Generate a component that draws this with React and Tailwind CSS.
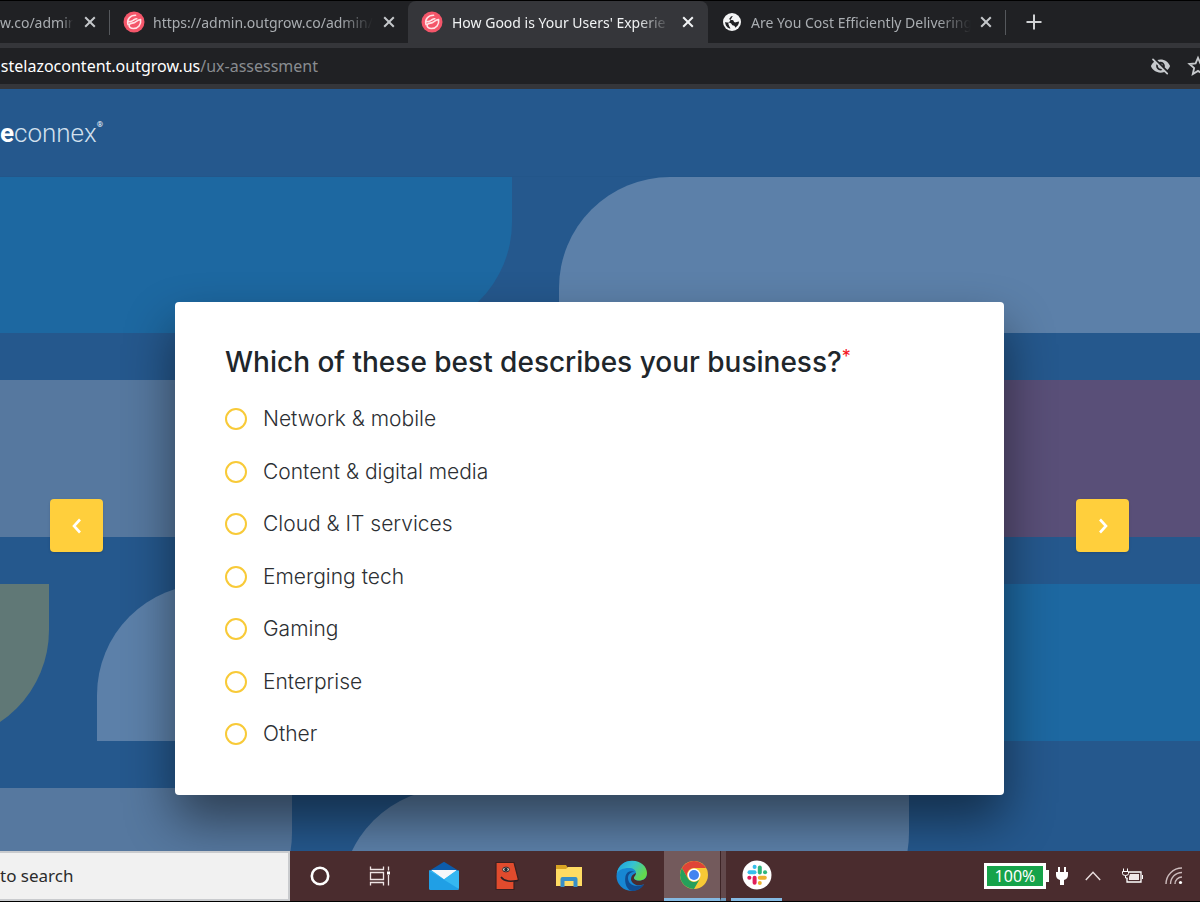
import React from "react";

const OPTIONS = [
  "Network & mobile",
  "Content & digital media",
  "Cloud & IT services",
  "Emerging tech",
  "Gaming",
  "Enterprise",
  "Other",
];

const FADE = "[mask-image:linear-gradient(to_right,black_85%,transparent_100%)]";

function CloseIcon() {
  return (
    <svg viewBox="0 0 12 12" className="size-3" fill="none" stroke="currentColor" strokeWidth="2">
      <path d="M1.2 1.2 10.8 10.8M10.8 1.2 1.2 10.8" />
    </svg>
  );
}

function OutgrowIcon() {
  return (
    <svg viewBox="0 0 22 22" className="size-[22px] shrink-0">
      <circle cx="11" cy="11" r="10.5" fill="#f4566a" />
      <path
        d="M5 13.600C3.600 8.400 7 4.300 12.600 4.300M17.600 8.600c.8 4.900-2.500 8.900-7.200 8.900-3 0-4.700-1.800-4.200-3.600.7-2.400 3.300-1.300 5.500-2.400 2.300-1.200 3.300-3 5.900-2.900M6.200 10.500c1.800.6 3.300-.8 4.800-1.700 1-.6 1.800-.9 2.800-1"
        fill="none"
        stroke="#ffe3e6"
        strokeWidth="1.600"
        strokeLinecap="round"
      />
    </svg>
  );
}

function GlobeIcon() {
  return (
    <svg viewBox="0 0 18 18" className="size-[18px] shrink-0">
      <circle cx="9" cy="9" r="9" fill="#f4f5f6" />
      <path
        d="M10.500 1.800c-.2 1.500-1.500 1.300-2.500 1.600-.9.300-.5 1.600-1.300 1.900-.7.300-.6.900-.1 1.300.8.700 2.600 0 3.500.7.800.6.500 1.700 1.500 2 1.200.4 2.200-.5 4.500-.7-.2 2.700-1.700 5-4 6.100-.1-1.400-.4-2-1.700-2.200-1.700-.200-1.600-1.700-2.600-2.300C6.500 9.500 4.400 9.700 2.200 9c-.1 3.300 2.100 6 5 6.700.3-1-.5-1.700-1-2.500-.4-.8-.3-1.600-1-2.200"
        fill="#202124"
      />
    </svg>
  );
}

function Logo() {
  return (
    <a href="#home" className="flex items-start font-['Roboto',sans-serif] text-[26px] leading-8 whitespace-nowrap text-white">
      <span className="font-bold">e</span>
      <span className="font-light text-[#d3e0ee]">connex</span>
      <span className="text-[8px] leading-4">®</span>
    </a>
  );
}

function Tabs() {
  return (
    <div className="flex h-[43px] items-stretch overflow-hidden border-t border-black bg-[#202124] font-['Noto_Sans','Open_Sans',sans-serif] text-[14px] text-[#a9adb1]">
      <div className="flex w-[110px] shrink-0 items-center">
        <span className={"w-[73px] overflow-hidden whitespace-nowrap " + FADE}>w.co/admin/</span>
        <button aria-label="Close tab" className="ml-[11px] text-[#c4c7ca]"><CloseIcon /></button>
        <span className="ml-auto h-[25px] w-px bg-[#55585c]" />
      </div>
      <div className="flex w-[298px] shrink-0 items-center pl-[13px]">
        <OutgrowIcon />
        <span className={"ml-2 w-[220px] overflow-hidden whitespace-nowrap " + FADE}>https://admin.outgrow.co/admin/</span>
        <button aria-label="Close tab" className="ml-[10px] text-[#c4c7ca]"><CloseIcon /></button>
      </div>
      <div className="flex w-[300px] shrink-0 items-center rounded-t-lg bg-[#35363a] pl-[13px] text-[#f1f3f4]">
        <OutgrowIcon />
        <span className={"ml-[9px] w-[218px] overflow-hidden whitespace-nowrap " + FADE}>How Good is Your Users' Experie</span>
        <button aria-label="Close tab" className="ml-3"><CloseIcon /></button>
      </div>
      <div className="flex w-[298px] shrink-0 items-center pl-[15px]">
        <GlobeIcon />
        <span className={"ml-[10px] w-[220px] overflow-hidden whitespace-nowrap " + FADE}>Are You Cost Efficiently Delivering</span>
        <button aria-label="Close tab" className="ml-[9px] text-[#c4c7ca]"><CloseIcon /></button>
        <span className="ml-auto h-[25px] w-px bg-[#55585c]" />
      </div>
      <button aria-label="New tab" className="ml-5 text-[#d0d2d4]">
        <svg viewBox="0 0 16 16" className="size-4" stroke="currentColor" strokeWidth="2"><path d="M8 .500v15M.500 8h15" /></svg>
      </button>
    </div>
  );
}

function AddressBar() {
  return (
    <div className="flex h-[46px] items-center justify-between overflow-hidden border-t-[5px] border-b-[5px] border-[#35363a] bg-[#202124] font-['Noto_Sans','Open_Sans',sans-serif] text-[16px]">
      <div className="flex w-[318px] justify-end whitespace-nowrap">
        <span className="text-white">stelazocontent.outgrow.us</span>
        <span className="text-[#898c90]">/ux-assessment</span>
      </div>
      <div className="-mr-[9px] flex items-center gap-4 text-[#c6c9cc]">
        <svg viewBox="0 0 24 24" className="size-[21px]" fill="currentColor">
          <path d="M12 6.500c2.760 0 5 2.240 5 5 0 .51-.1 1-.24 1.460l3.060 3.060c1.390-1.230 2.490-2.770 3.180-4.530C21.270 7.110 17 4 12 4c-1.270 0-2.490.2-3.640.57l2.170 2.170c.47-.14.96-.24 1.470-.24zM2.710 3.160a1 1 0 0 0 0 1.410l1.970 1.970A11.900 11.900 0 0 0 1 11.500C2.730 15.890 7 19 12 19c1.520 0 2.970-.3 4.310-.82l2.720 2.720a1 1 0 0 0 1.410-1.410L4.130 3.160a1 1 0 0 0-1.420 0zM12 16.500c-2.760 0-5-2.240-5-5 0-.77.18-1.500.49-2.140l1.570 1.570c-.03.18-.06.37-.06.57 0 1.660 1.340 3 3 3 .2 0 .38-.03.570-.07L14.140 16c-.65.320-1.370.5-2.140.5zm2.970-5.330a2.970 2.970 0 0 0-2.640-2.640l2.640 2.640z" />
        </svg>
        <svg viewBox="0 0 24 24" className="size-[22px]" fill="none" stroke="currentColor" strokeWidth="2">
          <path d="m12 3 2.600 6.200 6.700.6-5.100 4.400 1.500 6.600-5.700-3.500-5.700 3.500 1.500-6.600-5.100-4.400 6.700-.6z" />
        </svg>
      </div>
    </div>
  );
}

function Backdrop() {
  return (
    <svg
      viewBox="0 89 1200 762"
      preserveAspectRatio="xMidYMin slice"
      className="absolute inset-0 size-full"
      aria-hidden="true"
    >
      <path d="M0 177H512V222A111 111 0 0 1 401 333H0Z" fill="#1d68a1" />
      <path d="M559 333V288A111 111 0 0 1 670 177H1200V333Z" fill="#5c80a9" />
      <path d="M0 380H600V537H0Z" fill="#56789f" />
      <path d="M700 380H1200V537H700Z" fill="#594f78" />
      <path d="M-160 584H49V630A111 111 0 0 1 -62 741H-160Z" fill="#607876" />
      <path d="M97 741V695A111 111 0 0 1 208 584H600V741Z" fill="#5c80a9" />
      <path d="M700 584H1200V741H700Z" fill="#1d68a1" />
      <path d="M0 788H292V833A111 111 0 0 1 181 944H0Z" fill="#56789f" />
      <path d="M341 944V899A111 111 0 0 1 452 788H909V833A111 111 0 0 1 798 944Z" fill="#5c80a9" />
    </svg>
  );
}

function Arrow({ d }) {
  return (
    <svg viewBox="0 0 12 16" className="h-4 w-3" fill="none" stroke="currentColor" strokeWidth="2.600">
      <path d={d} />
    </svg>
  );
}

const NAV =
  "mb-[46px] flex size-[53px] shrink-0 items-center justify-center self-center rounded bg-[#ffcf3c] text-white shadow";

function Quiz() {
  return (
    <main className="relative flex-1 overflow-hidden bg-[#25588d]">
      <Backdrop />
      <div className="relative">
        <header className="flex h-[88px] items-center border-b border-[#23568a] bg-[#25588d]">
          <Logo />
        </header>
        <div className="flex gap-[72px] pt-[125px] pr-[71px] pb-14 pl-[50px]">
          <button aria-label="Previous question" className={NAV}><Arrow d="M9 1.500 3 8l6 6.500" /></button>
          <form className="flex-1 rounded bg-white px-[50px] pt-10 pb-[50px] font-['Inter','Lato',sans-serif] shadow-[0_25px_50px_rgba(0,0,0,0.48)]">
            <h1 className="mb-[26px] text-[28px] leading-10 font-medium text-[#20262b]">
              Which of these best describes your business?
              <sup className="text-[18px] font-normal text-[#f4141e]">*</sup>
            </h1>
            <div role="radiogroup" className="flex h-[337px] flex-col justify-between">
              {OPTIONS.map((label) => (
                <label key={label} className="flex h-[22px] items-center text-[21px] font-light text-[#2c2f33]">
                  <input
                    type="radio"
                    name="business"
                    className="mr-4 size-[22px] appearance-none rounded-full border-2 border-[#f8ca38] checked:bg-[#f8ca38]"
                  />
                  {label}
                </label>
              ))}
            </div>
          </form>
          <button aria-label="Next question" className={NAV}><Arrow d="m3 1.500 6 6.500-6 6.500" /></button>
        </div>
      </div>
    </main>
  );
}

function MailIcon() {
  return (
    <svg viewBox="0 0 32 30" className="h-[30px] w-8">
      <path d="M1 10 16 .800 31 10v5H1z" fill="#0c5cab" />
      <path d="M1 9.500h30V27q0 2-2 2H3q-2 0-2-2z" fill="#35b7f1" />
      <path d="M3.500 9h25L16 18z" fill="#f5f7fa" />
      <path d="M1 9.500 31 28q-.5 1-2 1H3q-2 0-2-2z" fill="#209fe5" />
      <path d="M3.500 9h25L16 18z" fill="#f5f7fa" />
    </svg>
  );
}

function FaceIcon() {
  return (
    <svg viewBox="0 0 26 30" className="h-[30px] w-[26px]">
      <path d="M2 1.500h18l4.500 17.500-4.500 1.500V28.500H2z" fill="#e04b2d" stroke="#3a2020" strokeWidth="1.200" strokeLinejoin="round" />
      <path d="M7 16c3.500 5 10 4.500 17 3.500" fill="none" stroke="#2a2025" strokeWidth="1.500" />
      <ellipse cx="12" cy="8.500" rx="3.500" ry="2.400" fill="#d5c9bb" stroke="#33272b" />
      <circle cx="12" cy="8.500" r="1.700" fill="#182b36" />
    </svg>
  );
}

function FolderIcon() {
  return (
    <svg viewBox="0 0 28 26" className="h-[26px] w-7">
      <path d="M1 2h10l2 3h14v8H1z" fill="#d9a423" />
      <path d="M1 6h10l2-2h14v19H1z" fill="#ffdc63" />
      <path d="M5.500 24v-8q0-2 2-2h13q2 0 2 2v8h-4v-6h-9v6z" fill="#388fc7" />
    </svg>
  );
}

function EdgeIcon() {
  return (
    <svg viewBox="0 0 32 32" className="size-8">
      <defs>
        <linearGradient id="edge-top" x1="0" y1="0" x2="1" y2="0.500">
          <stop offset="0" stopColor="#1a9ae0" />
          <stop offset="0.500" stopColor="#36c2d2" />
          <stop offset="1" stopColor="#64d94c" />
        </linearGradient>
      </defs>
      <circle cx="15.500" cy="16" r="15" fill="#1787d3" />
      <path d="M9.500 16c1-4 5-6.500 10-3.500C16 11 12 14 12 18c0 6 6 10 16 6.500C25 29 20 31 17 31c-6 0-9-8-7.500-15z" fill="#104c91" />
      <path d="M20 13c.3 3-2 3.600-2 5s2 2.600 5 2.600c3.500 0 6.500-1.500 8-4.600V23l-3.500 1.500C20 27 15 23 15 19c0-3 2-5 5-6z" fill="#4a2c2e" />
      <path d="M.800 14C2 5 9 .800 16 .800c9 0 15 6 15 12.200 0 5-4 7.500-8 7.500-3 0-5-1-5-2.500s2-2 2-5C20 10 17 8 13 8 7 8 2 10 .800 14z" fill="url(#edge-top)" />
    </svg>
  );
}

function ChromeIcon() {
  return (
    <svg viewBox="0 0 28 28" className="size-7">
      <circle cx="14" cy="14" r="14" fill="#f7c936" />
      <path d="M1.880 7A14 14 0 0 1 26.120 7H14A7 7 0 0 0 7.940 17.500z" fill="#df4437" />
      <path d="M1.880 7A14 14 0 0 0 14 28L20.060 17.500A7 7 0 0 1 7.940 17.500z" fill="#269f5b" />
      <circle cx="14" cy="14" r="6.500" fill="#fff" />
      <circle cx="14" cy="14" r="5" fill="#4284f0" />
    </svg>
  );
}

function SlackIcon() {
  return (
    <svg viewBox="0 0 30 30" className="size-[30px]">
      <circle cx="15" cy="15" r="14.500" fill="#fff" />
      <g strokeLinecap="round" strokeWidth="4">
        <path d="M7.500 12.300h5" stroke="#36bfec" />
        <path d="M12.600 6.800v.1" stroke="#36bfec" />
        <path d="M17.800 7.500v5" stroke="#2eb67d" />
        <path d="M23 12.300h.1" stroke="#2eb67d" />
        <path d="M17.800 17.700h5" stroke="#ecb22e" />
        <path d="M17.800 23v.1" stroke="#ecb22e" />
        <path d="M12.600 17.700v5" stroke="#e01e5a" />
        <path d="M7.300 17.700h.1" stroke="#e01e5a" />
      </g>
    </svg>
  );
}

function Taskbar() {
  const cell = "flex items-center justify-center";
  return (
    <footer className="flex h-[51px] items-stretch border-b border-black bg-[#4a2c2e]">
      <input
        aria-label="Search"
        defaultValue="to search"
        className="w-[290px] border-y-2 border-r-2 border-[#c9cbce] bg-[#f1f1f1] font-['Noto_Sans','Open_Sans',sans-serif] text-[17px] text-[#2b2b2b] outline-none"
      />
      <button aria-label="Cortana" className={cell + " w-[60px]"}>
        <svg viewBox="0 0 20 20" className="size-5"><circle cx="10" cy="10" r="8.200" fill="none" stroke="#fff" strokeWidth="2.600" /></svg>
      </button>
      <button aria-label="Task view" className={cell + " w-[60px]"}>
        <svg viewBox="0 0 22 20" className="h-5 w-[22px]" fill="none" stroke="#eee4e4" strokeWidth="1.300">
          <path d="M1.500.500v3h13v-3M1.500 19.500v-3h13v3M1.500 6.500h13v7h-13zM19.500.500v4M19.500 9v10.500" />
          <path d="M18 5.500h3v3h-3z" fill="#fff" stroke="none" />
        </svg>
      </button>
      <div className="ml-[3px] grid w-[375px] grid-cols-6">
        <button aria-label="Mail" className={cell}><MailIcon /></button>
        <button aria-label="Assistant" className={cell}><FaceIcon /></button>
        <button aria-label="File Explorer" className={cell}><FolderIcon /></button>
        <button aria-label="Edge" className={cell}><EdgeIcon /></button>
        <button aria-label="Chrome" className="flex">
          <span className={cell + " ml-px h-full w-[56px] border-b-[3px] border-[#84b9e2] bg-[#735a5c] pl-1"}><ChromeIcon /></span>
          <span className="h-full flex-1 border-b-[3px] border-l border-b-[#6f9cc0] border-l-[#3d2426] bg-[#62494c]" />
        </button>
        <button aria-label="Slack" className={cell}>
          <span className={cell + " h-full w-[51px] border-b-[3px] border-[#84b9e2]"}><SlackIcon /></span>
        </button>
      </div>
      <div className="ml-auto flex shrink-0 items-center gap-[10px] pr-[17px] text-white">
        <div className="flex items-center">
          <span className="flex h-[26px] w-[62px] items-center justify-center border-[3px] border-white bg-[#16a34a] font-['Noto_Sans','Open_Sans',sans-serif] text-[16px]">100%</span>
          <span className="mr-[7px] h-3 w-[3px] bg-white" />
          <svg viewBox="0 0 12 18" className="h-[18px] w-3" fill="#fff">
            <path d="M2 0h2v5h4V0h2v5h2v3q0 4-4 5v5H4v-5Q0 12 0 8V5h2z" />
          </svg>
        </div>
        <svg viewBox="0 0 16 10" className="ml-[7px] h-[10px] w-4" fill="none" stroke="#eadede" strokeWidth="1.400"><path d="M.800 9 8 1.200 15.200 9" /></svg>
        <svg viewBox="0 0 22 16" className="ml-[11px] h-4 w-[22px]" fill="none" stroke="#fff">
          <path d="M7 4h12v10H5v-4" strokeWidth="1.300" />
          <path d="M8 6h9v6H7V9z" fill="#f0e8e8" stroke="none" />
          <path d="M20.500 7v4M1.500.500v3M5.500.500v3M.500 3.500h6v2q0 2-3 2t-3-2zM3.500 7.500V10h2" />
        </svg>
        <svg viewBox="0 0 18 18" className="ml-[11px] size-[18px]" fill="none" stroke="#cdbcbd" strokeWidth="1.400">
          <path d="M1 17A16 16 0 0 1 17 1M5.500 17A11.500 11.500 0 0 1 17 5.500M10 17A7 7 0 0 1 17 10" />
          <circle cx="15.500" cy="15.500" r="1.600" fill="#fff" stroke="none" />
        </svg>
      </div>
    </footer>
  );
}

export default function App() {
  return (
    <div className="flex min-h-screen flex-col overflow-hidden">
      <Tabs />
      <AddressBar />
      <Quiz />
      <Taskbar />
    </div>
  );
}
